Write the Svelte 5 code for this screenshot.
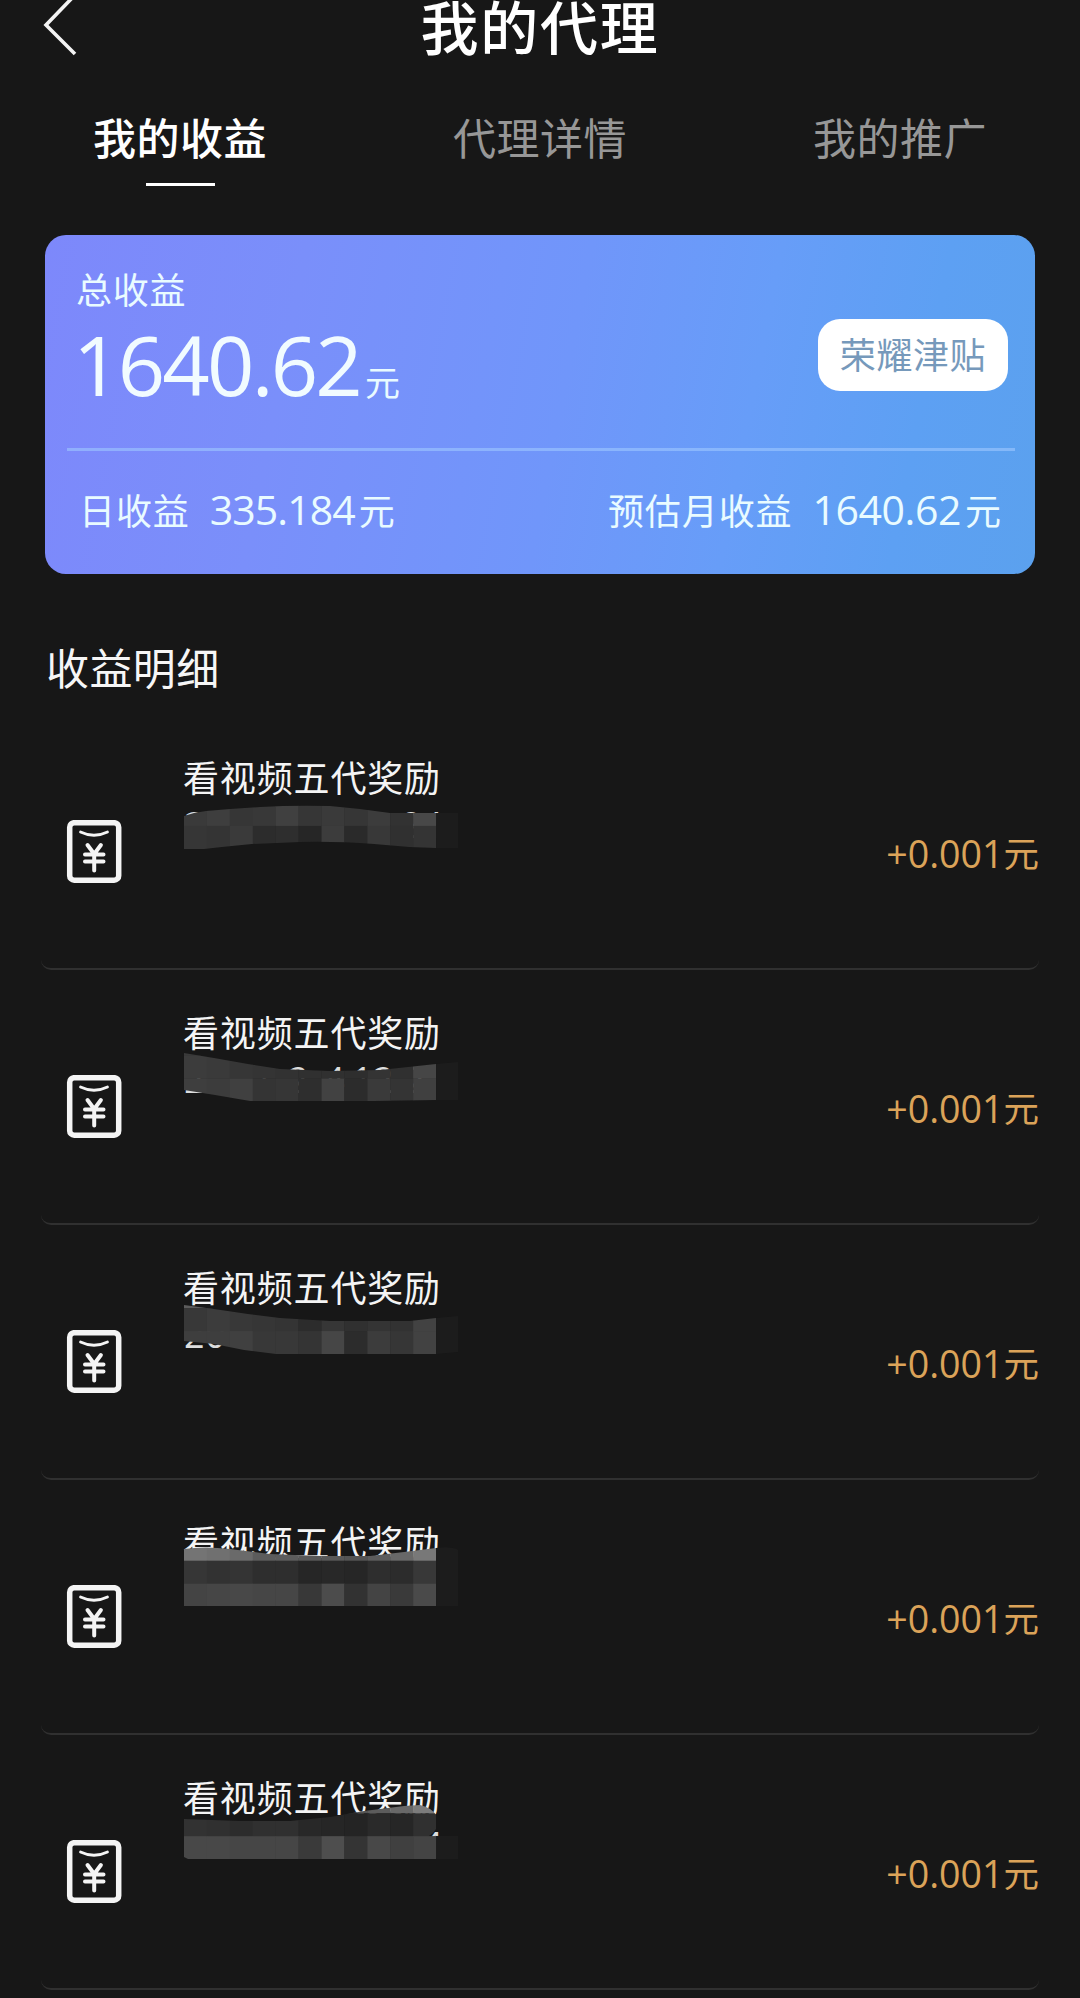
<script>
  const tabs = ['我的收益', '代理详情', '我的推广'];
  let active = $state(0);

  const CELL = 22.91;

  // Privacy mosaic for each entry: outline, grey levels per cell and the date digits beneath it.
  const records = [
    {
      shape: 'M0 101L10 98L22 96L46 94L76 92Q110 90 146 91L176 94L206 98H274V133H252L225 132L190 129Q150 126 116 127L68 129L38 132L20 134H0Z',
      gridTop: 88,
      cells: [
        [58, 62, 54, 56, 64, 54, 58, 54, 60, 50, 72],
        [54, 52, 58, 44, 46, 38, 60, 42, 56, 48, 52]
      ],
      digits: [['2', 0], ['2', 217], ['4', 238]]
    },
    {
      shape: 'M0 83L30 88L64 94L96 99L146 101L196 100L252 94L274 92V130H252L190 131H66L31 125L0 120Z',
      gridTop: 62.7,
      cells: [
        [58, 58, 56, 54, 50, 48, 48, 46, 52, 48, 66],
        [60, 58, 54, 52, 50, 48, 48, 46, 52, 48, 70],
        [62, 60, 64, 52, 54, 46, 66, 44, 58, 52, 64]
      ],
      digits: [['2', 0], ['1', 69], ['2', 104], ['4', 140], ['1', 168], ['2', 189], ['2', 221]]
    },
    {
      shape: 'M0 80L30 84L64 89L96 93L146 96H226L252 93L274 91V127L252 129H92L60 125L30 119L0 116Z',
      gridTop: 60.2,
      cells: [
        [92, 80, 64, 56, 54, 46, 54, 48, 52, 50, 66],
        [56, 60, 56, 54, 52, 44, 54, 48, 52, 50, 66],
        [62, 62, 64, 56, 56, 52, 70, 44, 60, 54, 66]
      ],
      digits: [['2', 0], ['0', 21]]
    },
    {
      shape: 'M0 69Q20 66 46 69L86 74L136 76H186L220 72L252 68Q268 66 274 70V126H0Z',
      gridTop: 57.8,
      cells: [
        [116, 112, 106, 92, 92, 88, 88, 84, 92, 104, 120],
        [54, 50, 52, 46, 46, 38, 40, 38, 46, 44, 56],
        [68, 70, 72, 70, 70, 56, 76, 50, 68, 58, 74]
      ],
      digits: []
    },
    {
      shape: 'M0 84L56 86L106 86L146 82L180 76L220 71L236 70Q248 73 252 80V94Q250 98 245 101H274V124H4L0 122Z',
      gridTop: 55.3,
      cells: [
        [52, 52, 52, 52, 52, 52, 80, 84, 92, 104, 124],
        [50, 48, 44, 48, 48, 40, 38, 36, 42, 38, 48],
        [72, 72, 70, 70, 70, 58, 78, 52, 72, 64, 68]
      ],
      digits: [['4', 238]]
    }
  ];
</script>

<main class="screen">
  <header class="topbar">
    <button class="back" aria-label="返回">
      <svg viewBox="0 0 40 60" width="40" height="60"><path d="M34-4 6 25l29 29" /></svg>
    </button>
    <h1>我的代理</h1>
    <span class="side"></span>
  </header>

  <nav class="tabs">
    {#each tabs as tab, i}
      <button class="tab" class:active={active === i} onclick={() => (active = i)}>{tab}</button>
    {/each}
  </nav>

  <section class="card">
    <div class="summary">
      <div class="total">
        <div class="label">总收益</div>
        <div class="sum"><span class="num">1640.62</span><span class="unit">元</span></div>
      </div>
      <button class="badge">荣耀津贴</button>
    </div>
    <div class="periods">
      <div class="period"><span>日收益</span><b>335.184</b><span>元</span></div>
      <div class="period"><span>预估月收益</span><b class="month">1640.62</b><span>元</span></div>
    </div>
  </section>

  <h2>收益明细</h2>

  <ul class="list">
    {#each records as r, i}
      <li class="row">
        <svg class="icon" viewBox="0 0 56 65" width="56" height="65">
          <rect x="3.7" y="2.700" width="49" height="57.5" rx="4.5" stroke-width="5.5" />
          <path d="M14.500 12Q28 18.500 41.500 12" stroke-width="2.8" />
          <path d="M21.500 25l6.700 9 6.700-9M28.200 34V50.500M19 34.500h18.500M19 41.500h18.500" stroke-width="4" />
        </svg>
        <div class="info">
          <div class="name">看视频五代奖励</div>
          <svg class="mosaic" viewBox="0 0 276 140" width="276" height="140">
            <defs><clipPath id="blur-{i}"><path d={r.shape} /></clipPath></defs>
            {#each r.digits as [d, x]}
              <text {x} y="122.5">{d}</text>
            {/each}
            <g clip-path="url(#blur-{i})">
              {#each r.cells as line, y}
                {#each line as level, x}
                  <rect x={x * CELL} y={r.gridTop + y * CELL} width={CELL + 0.3} height={CELL + 0.3} fill="rgb({level},{level},{level})" />
                {/each}
              {/each}
              <rect x={11 * CELL} y="50" width={CELL} height="90" fill="#1c1c1c" />
            </g>
          </svg>
        </div>
        <div class="amount">+0.001<span>元</span></div>
      </li>
    {/each}
  </ul>
</main>

<style>
  :global(body) {
    background: #171717;
    overflow: hidden;
  }
  .screen {
    width: 1080px;
    height: 1998px;
    overflow: hidden;
    background: #171717;
    color: #fff;
    font-family: 'Noto Sans CJK SC', sans-serif;
  }
  button {
    border: 0;
    padding: 0;
    margin: 0;
    background: none;
    font-family: inherit;
    color: inherit;
  }
  h1, h2, ul { margin: 0; padding: 0; }
  .topbar {
    display: flex;
    height: 60px;
    justify-content: space-between;
    padding: 0 40px;
  }
  .back { width: 40px; height: 60px; }
  .back svg { display: block; fill: none; stroke: #f4f4f4; stroke-width: 3.6; }
  .side { width: 40px; }
  h1 {
    font-size: 58px;
    font-weight: 500;
    letter-spacing: 1.8px;
    line-height: 50px;
    white-space: nowrap;
  }
  .tabs {
    display: grid;
    grid-template-columns: repeat(3, 1fr);
    height: 175px;
  }
  .tab {
    display: flex;
    flex-direction: column;
    align-items: center;
    height: 127px;
    padding-top: 46px;
    box-sizing: border-box;
    font-size: 43px;
    line-height: 60px;
    letter-spacing: 0.5px;
    color: #979797;
  }
  .tab.active { color: #fff; font-weight: 500; }
  .tab.active::after {
    content: '';
    width: 69px;
    height: 3px;
    margin-top: 17px;
    background: #fff;
  }
  .card {
    width: 990px;
    height: 339px;
    margin: 0 45px;
    border-radius: 21px;
    background: linear-gradient(101deg, #7d88fb 0%, #7a8ffa 25%, #7096fa 52%, #679df8 70%, #5da0f3 86%, #5ba1ee 100%);
    color: #e9fbff;
  }
  .summary {
    display: flex;
    justify-content: space-between;
    height: 213px;
    margin: 0 20px 0 22px;
    border-bottom: 3px solid rgba(158, 200, 255, 0.6);
  }
  .total { padding: 28px 0 0 9px; }
  .label { font-size: 36px; line-height: 50px; letter-spacing: 0.7px; }
  .sum { display: flex; align-items: baseline; height: 90px; margin-top: 6px; line-height: 90px; }
  .num { font-family: 'Open Sans', sans-serif; font-size: 83px; letter-spacing: -2.8px; margin-left: -3px; color: #f1fbff; }
  .unit { font-size: 35px; margin-left: 5px; }
  .badge {
    width: 190px;
    height: 72px;
    margin: 84px 7px 0 0;
    border-radius: 22px;
    background: #fff;
    color: #7699bb;
    font-size: 36px;
    line-height: 66px;
    letter-spacing: 0.6px;
    padding-bottom: 4px;
  }
  .periods {
    display: flex;
    justify-content: space-between;
    padding: 28px 33px 0 34px;
    line-height: 60px;
  }
  .period { display: flex; align-items: baseline; font-size: 36px; letter-spacing: 0.9px; }
  .period b {
    margin: 0 4px 0 20px;
    font-family: 'Open Sans', sans-serif;
    font-weight: 400;
    font-size: 41px;
    letter-spacing: -0.9px;
  }
  .period .month { letter-spacing: -0.4px; }
  h2 {
    height: 141px;
    padding: 0 46px;
    font-size: 43px;
    font-weight: 400;
    letter-spacing: 0.4px;
    line-height: 184px;
    color: #f6f6f6;
  }
  .list { padding: 0 41px; list-style: none; }
  .row {
    display: flex;
    box-sizing: border-box;
    height: 255px;
    border-bottom: 2px solid #303030;
    border-radius: 0 0 10px 10px;
  }
  .icon { flex: none; margin: 105px 0 0 25px; fill: none; stroke: #f4f4f4; stroke-linecap: round; stroke-linejoin: round; }
  .info { position: relative; flex: 1; padding: 35px 0 0 61px; }
  .name { font-size: 36px; line-height: 52px; letter-spacing: 0.85px; color: #f4f4f4; }
  .mosaic { position: absolute; left: 62px; top: 0; }
  .mosaic text { font-family: 'Open Sans', sans-serif; font-size: 36px; fill: #ddd; }
  .amount { margin-top: 109px; font-family: 'Open Sans', sans-serif; font-size: 37.6px; line-height: 60px; color: #dba359; white-space: nowrap; }
  .amount span { font-family: 'Noto Sans CJK SC', sans-serif; font-size: 35.5px; vertical-align: 1px; line-height: 1; }
</style>
